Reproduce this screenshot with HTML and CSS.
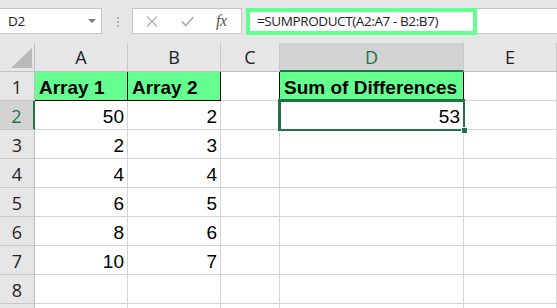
FILE: index.html
```html
<!DOCTYPE html>
<html>
<head>
<meta charset="utf-8">
<link rel="stylesheet" href="styles.css">
</head>
<body>
<div class="toolbar">
  <div class="namebox">
    <span class="ref">D2</span>
    <svg class="caret" width="8" height="4" viewBox="0 0 8 4"><polygon points="0,0 8,0 4,4" fill="#7a7a7a"/></svg>
  </div>
  <div class="sep"><i></i><i></i><i></i></div>
  <div class="fbtns">
    <svg class="ico-x" width="12" height="11" viewBox="0 0 12 11"><path d="M1 0.5 L11 10.5 M11 0.5 L1 10.5" stroke="#b3b3b3" stroke-width="1.4" fill="none"/></svg>
    <svg class="ico-ok" width="13" height="11" viewBox="0 0 13 11"><path d="M0.8 5.5 L4.8 9.5 L12.4 1" stroke="#b3b3b3" stroke-width="1.8" fill="none"/></svg>
    <span class="fx">fx</span>
  </div>
  <div class="formula">
    <div class="fhl">=SUMPRODUCT(A2:A7 - B2:B7)</div>
  </div>
</div>
<div class="sheet">
  <div class="corner"><svg width="21" height="20" viewBox="0 0 21 20"><polygon points="0,20 21,0 21,20" fill="#b8b8b8"/></svg></div>
  <div class="ch">A</div><div class="ch">B</div><div class="ch">C</div><div class="ch ch-sel">D</div><div class="ch">E</div>

  <div class="rh">1</div><div class="c hd bx">Array 1</div><div class="c hd bx">Array 2</div><div class="c bl"></div><div class="c hd bx">Sum of Differences</div><div class="c"></div>
  <div class="rh rh-sel">2</div><div class="c n">50</div><div class="c n">2</div><div class="c"></div><div class="c n">53</div><div class="c"></div>
  <div class="rh">3</div><div class="c n">2</div><div class="c n">3</div><div class="c"></div><div class="c"></div><div class="c"></div>
  <div class="rh">4</div><div class="c n">4</div><div class="c n">4</div><div class="c"></div><div class="c"></div><div class="c"></div>
  <div class="rh">5</div><div class="c n">6</div><div class="c n">5</div><div class="c"></div><div class="c"></div><div class="c"></div>
  <div class="rh">6</div><div class="c n">8</div><div class="c n">6</div><div class="c"></div><div class="c"></div><div class="c"></div>
  <div class="rh">7</div><div class="c n">10</div><div class="c n">7</div><div class="c"></div><div class="c"></div><div class="c"></div>
  <div class="rh">8</div><div class="c"></div><div class="c"></div><div class="c"></div><div class="c"></div><div class="c"></div>
  <div class="rh"></div><div class="c"></div><div class="c"></div><div class="c"></div><div class="c"></div><div class="c"></div>

  <div class="sel"><span class="handle"></span></div>
</div>
</body>
</html>
```
FILE: styles.css
```css
* { box-sizing: border-box; }
html, body { margin: 0; padding: 0; }
body {
  width: 557px;
  height: 308px;
  overflow: hidden;
  background: #e6e6e6;
  font-family: "Open Sans", "Noto Sans", sans-serif;
}

/* ---------- formula bar ---------- */
.toolbar {
  display: flex;
  align-items: flex-start;
  height: 43px;
  padding-top: 8px;
}
.namebox {
  width: 102px;
  height: 26px;
  background: #fff;
  border: 1px solid #c6c6c6;
  border-left: none;
  display: flex;
  align-items: center;
  justify-content: space-between;
  padding: 0 5px 0 8px;
  font-size: 13.5px;
  letter-spacing: -0.4px;
  color: #222;
}
.namebox .ref { line-height: 24px; }
.sep {
  margin-left: 15px;
  margin-top: 9px;
  display: flex;
  flex-direction: column;
  gap: 2px;
}
.sep i {
  display: block;
  width: 2px;
  height: 2px;
  background: #b0b0b0;
}
.fbtns {
  margin-left: 13px;
  width: 110px;
  height: 26px;
  background: #fff;
  border: 1px solid #c6c6c6;
  display: flex;
  align-items: center;
  padding-left: 13px;
}
.ico-ok { margin-left: 23px; }
.fx {
  margin-left: 22px;
  font-family: "Liberation Serif", "DejaVu Serif", serif;
  font-style: italic;
  font-size: 16px;
  color: #555;
  line-height: 20px;
  letter-spacing: -0.5px;
}
.formula {
  flex: 1;
  margin-left: 4px;
  height: 26px;
  background: #fff;
  border-top: 1px solid #c6c6c6;
  border-bottom: 1px solid #c6c6c6;
  display: flex;
}
.fhl {
  margin-top: -1px;
  width: 231px;
  height: 27px;
  border: 4px solid #64ff8e;
  padding-left: 7px;
  font-size: 13.5px;
  letter-spacing: -0.4px;
  line-height: 18px;
  color: #222;
  white-space: nowrap;
}

/* ---------- sheet ---------- */
.sheet {
  position: relative;
  display: grid;
  grid-template-columns: 35px 93px 93px 59px 184px 93px;
  grid-auto-rows: 29px;
  background: #fff;
}
.corner {
  background: #e6e6e6;
  border-right: 1px solid #c3c3c3;
  border-bottom: 1px solid #c3c3c3;
  padding: 5px 0 0 11px;
}
.corner svg { display: block; }
.ch {
  background: #e6e6e6;
  border-right: 1px solid #c8c8c8;
  border-bottom: 1px solid #bdbdbd;
  text-align: center;
  font-size: 18px;
  line-height: 28px;
  color: #222;
}
.ch-sel {
  background: #d2d2d2;
  color: #217346;
  border-bottom: 2px solid #217346;
}
.rh {
  background: #e6e6e6;
  border-right: 1px solid #bdbdbd;
  border-bottom: 1px solid #c8c8c8;
  text-align: center;
  font-size: 18px;
  line-height: 28px;
  padding-top: 1px;
  color: #222;
}
.rh-sel {
  background: #d2d2d2;
  color: #217346;
  border-right: 2px solid #217346;
}
.c {
  border-right: 1px solid #d4d4d4;
  border-bottom: 1px solid #d4d4d4;
  font-family: "Liberation Sans", Arial, sans-serif;
  font-size: 19px;
  line-height: 24px;
  padding: 4px 3px 0 4px;
  color: #000;
  white-space: nowrap;
}
.hd {
  background: #64ff8e;
  font-weight: bold;
}
.bx {
  border-right-color: #000;
  border-bottom-color: #000;
}
.bl { border-right-color: #000; }
.n { text-align: right; }

.sel {
  position: absolute;
  left: 278px;
  top: 56px;
  width: 187px;
  height: 32px;
  border-style: solid;
  border-color: #217346;
  border-width: 3px 2px 2px 3px;
}
.handle {
  position: absolute;
  right: -5px;
  bottom: -5px;
  width: 7px;
  height: 7px;
  background: #217346;
  border: 1px solid #fff;
}
```
